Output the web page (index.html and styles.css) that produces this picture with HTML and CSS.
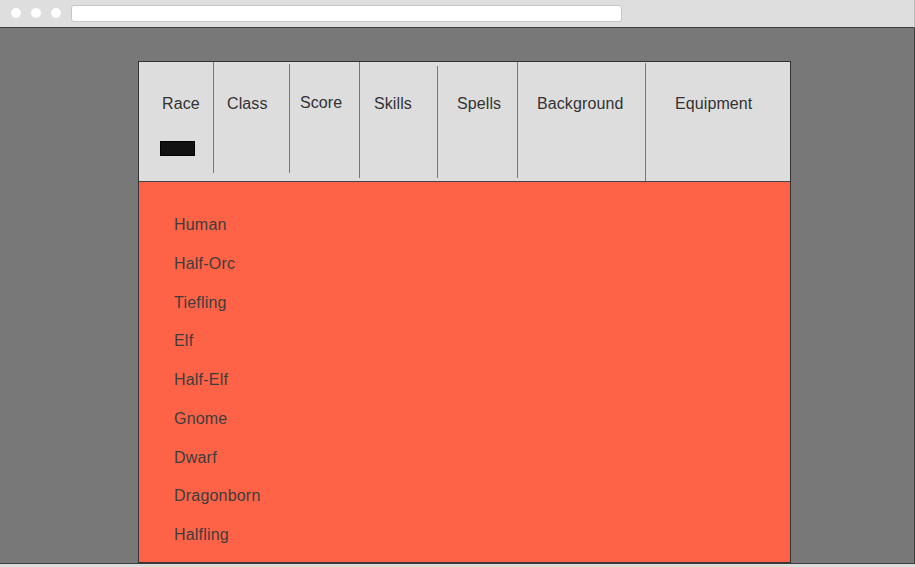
FILE: index.html
```html
<!DOCTYPE html>
<html>
<head>
<meta charset="utf-8">
<link rel="stylesheet" href="styles.css">
</head>
<body>
<div class="window">
  <div class="chrome">
    <span class="dot"></span>
    <span class="dot"></span>
    <span class="dot"></span>
    <div class="address"></div>
  </div>
  <div class="viewport">
    <div class="panel">
      <nav class="tabs">
        <div class="tab tab-race">
          <span class="label">Race</span>
          <span class="marker"></span>
        </div>
        <div class="sep sep-1"></div>
        <div class="tab tab-class"><span class="label">Class</span></div>
        <div class="sep sep-2"></div>
        <div class="tab tab-score"><span class="label">Score</span></div>
        <div class="sep sep-3"></div>
        <div class="tab tab-skills"><span class="label">Skills</span></div>
        <div class="sep sep-4"></div>
        <div class="tab tab-spells"><span class="label">Spells</span></div>
        <div class="sep sep-5"></div>
        <div class="tab tab-background"><span class="label">Background</span></div>
        <div class="sep sep-6"></div>
        <div class="tab tab-equipment"><span class="label">Equipment</span></div>
      </nav>
      <ul class="races">
        <li>Human</li>
        <li>Half-Orc</li>
        <li>Tiefling</li>
        <li>Elf</li>
        <li>Half-Elf</li>
        <li>Gnome</li>
        <li>Dwarf</li>
        <li>Dragonborn</li>
        <li>Halfling</li>
      </ul>
    </div>
  </div>
  <div class="bottom-strip"></div>
</div>
</body>
</html>
```

FILE: styles.css
```css
* { box-sizing: border-box; }

html, body {
  margin: 0;
  padding: 0;
  width: 915px;
  height: 567px;
  overflow: hidden;
  background: #dcdcdc;
  font-family: "Liberation Sans", Arial, sans-serif;
}

.window {
  width: 915px;
  height: 567px;
  display: flex;
  flex-direction: column;
}

.chrome {
  height: 28px;
  flex: none;
  background: #dedede;
  border-bottom: 1px solid #3c3c3c;
  border-right: 1px solid #bdbdbd;
  display: flex;
  align-items: center;
  gap: 10px;
  padding-left: 11px;
  padding-bottom: 1px;
}

.dot {
  width: 10px;
  height: 10px;
  border-radius: 50%;
  background: #ffffff;
  flex: none;
}

.address {
  width: 551px;
  height: 17px;
  background: #ffffff;
  border: 1px solid #c6c6c6;
  border-radius: 3px;
  margin-top: 1px;
}

.viewport {
  height: 536px;
  flex: none;
  background: #787878;
  border-right: 1px solid #3c3c3c;
  border-bottom: 1px solid #3c3c3c;
  overflow: hidden;
  padding-top: 33px;
  padding-left: 138px;
}

.panel {
  width: 653px;
  border: 1px solid #333333;
  background: #ff6347;
}

.tabs {
  display: flex;
  align-items: flex-start;
  height: 120px;
  background: #dddddd;
  border-bottom: 1px solid #444444;
  color: #333333;
  font-size: 16px;
}

.tab {
  display: flex;
  flex-direction: column;
  align-items: flex-start;
  flex: none;
  height: 119px;
  padding-top: 33px;
}

.label {
  line-height: 18px;
  display: block;
  letter-spacing: 0.1px;
}

.marker {
  display: block;
  width: 35px;
  height: 15px;
  margin-top: 28px;
  margin-left: -2px;
  background: #111111;
  border: 1px solid #000000;
}

.tab-race { width: 74px; padding-left: 23px; }
.tab-class { width: 75px; padding-left: 13px; }
.tab-score { width: 69px; padding-left: 10px; padding-top: 32px; }
.tab-skills { width: 77px; padding-left: 14px; }
.tab-spells { width: 79px; padding-left: 19px; }
.tab-background { width: 127px; padding-left: 19px; }
.tab-equipment { width: 144px; padding-left: 29px; }

.sep {
  width: 1px;
  flex: none;
  background: #777777;
}

.sep-1 { height: 111px; }
.sep-2 { height: 109px; margin-top: 2px; }
.sep-3 { height: 116px; }
.sep-4 { height: 112px; margin-top: 4px; }
.sep-5 { height: 116px; }
.sep-6 { height: 118px; margin-top: 1px; }

.races {
  list-style: none;
  margin: 0;
  height: 380px;
  padding: 24px 0 0 35px;
  color: #3d3d3d;
  font-size: 16px;
  letter-spacing: 0.2px;
}

.races li {
  line-height: 38.75px;
}

.bottom-strip {
  flex: 1;
  background: #dcdcdc;
}
```
